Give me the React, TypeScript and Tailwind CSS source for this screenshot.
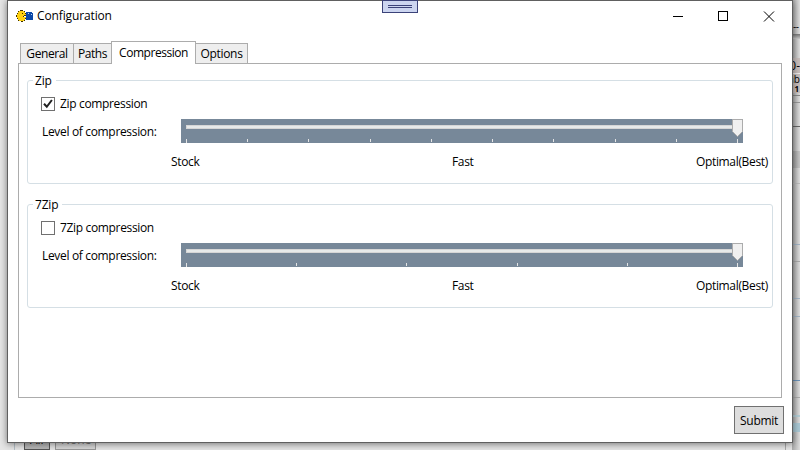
import React from "react";

const zipTicks = [0, 61, 122, 184, 245, 306, 367, 429, 490, 551];
const sevenTicks = [0, 110, 220, 331, 441, 551];

function AppIcon() {
  return (
    <svg width="17" height="12" viewBox="0 0 17 12" shapeRendering="crispEdges">
      <path d="M10 2h6v1h1v7h-7z" fill="#0a48a8" />
      <path d="M12 3h1v1h-1zM15 4h1v1h-1z" fill="#b8d0f4" />
      <path d="M3 1h5v1h1v1h1v2h-2v1h-1v1h3v2h-1v1h-1v1h-5v-1h-1v-1h-1v-6h1v-1h1z" fill="#fdd010" />
      <path d="M4 0h3v1h-3zM2 1h1v1h-1zM8 1h1v1h-1zM1 3h1v1h-1zM0 5h1v2h-1zM1 8h1v1h-1zM2 10h1v1h-1zM5 11h2v1h-2zM8 10h1v1h-1zM9 3h1v1h-1zM6 3h1v1h-1zM8 5h2v1h-2zM7 6h1v1h-1zM9 8h1v1h-1z" fill="#3d3000" />
    </svg>
  );
}

function Slider({ ticks }: { ticks: number[] }) {
  return (
    <svg className="block" width="562" height="24" shapeRendering="crispEdges">
      <rect width="562" height="24" fill="#778899" />
      <rect x="5.5" y="6.5" width="551" height="3" fill="#e7eaea" stroke="#d6d6d6" />
      {ticks.map((x, i) => (
        <rect key={x} x={x + 5} y="20" width="1" height={i === 0 || i === ticks.length - 1 ? 4 : 3} fill="#e5e5e5" />
      ))}
      <path d="M551.5 .5h10v12l-5 5l-5 -5z" fill="#f0f0f0" stroke="#acacac" shapeRendering="auto" />
    </svg>
  );
}

interface GroupProps {
  title: string;
  label: string;
  checked?: boolean;
  ticks: number[];
}

function Group({ title, label, checked, ticks }: GroupProps) {
  return (
    <section className="flex h-[104px] w-[746px] flex-col rounded-[3px] border border-[#d5dfe5] pl-[5px]">
      <h2 className="-mt-[9px] h-[18px] self-start bg-white pr-1 pl-[2px] leading-[18px] tracking-[-0.2px]">{title}</h2>
      <label className="mt-[7px] ml-2 flex h-[14px] items-center">
        <span className="flex h-[14px] w-[14px] items-center justify-center border border-[#707070] bg-white">
          {checked && (
            <svg width="12" height="12" viewBox="0 0 12 12">
              <path d="M2 5.8L4.8 8.8L9.9 2" fill="none" stroke="#212121" strokeWidth="2" />
            </svg>
          )}
        </span>
        <span className="ml-[5px] tracking-[-0.34px]">{label}</span>
      </label>
      <div className="mt-2 ml-2 flex h-6 items-center">
        <span className="w-[140px] pt-[2px] pl-px tracking-[-0.33px]">Level of compression:</span>
        <Slider ticks={ticks} />
      </div>
      <div className="mt-[10px] ml-[138px] grid h-[18px] w-[597px] grid-cols-[281px_1fr_auto] items-center tracking-[-0.33px]">
        <span>Stock</span>
        <span>Fast</span>
        <span>Optimal(Best)</span>
      </div>
    </section>
  );
}

function BackgroundEdge() {
  return (
    <aside className="flex w-[8px] flex-col bg-linear-to-r from-[#aaa] to-[#dedede] text-[10px]">
      <div className="h-[34px] pt-[19px] pl-px leading-[14px] tracking-[-0.5px]">--</div>
      <div className="h-[5px] bg-linear-to-b from-[#777] to-[#ccc]" />
      <div className="h-[19px]" />
      <div className="flex h-[35px] flex-col items-end bg-[#c8bebc]">
        <span className="h-[15px] text-[12px] leading-[15px]">0-</span>
        <span className="h-[12px] border-t border-[#eee] leading-[11px]">ab</span>
        <span className="h-[8px] pr-px text-[8px] leading-[8px] font-bold">1</span>
      </div>
      <div className="mt-[2px] h-px bg-[#888]" />
      <div className="mt-[6px] h-px bg-[#999]" />
      <div className="mt-[23px] h-px bg-[#666]" />
      <div className="mt-6 h-[17px] bg-black/10" />
      <div className="mt-[15px] h-px bg-[#bbb]" />
      <div className="mt-[60px] h-px bg-[#a3b4c5]" />
      <div className="mt-4 h-px bg-[#aaa]" />
      <div className="mt-9 h-px bg-[#a3b4c5]" />
      <div className="mt-[17px] h-px bg-[#a3b4c5]" />
      <div className="mt-[63px] h-px bg-[#6a92b8]" />
      <div className="mt-4 h-px bg-[#aaa]" />
      <div className="mt-[17px] h-[2px] bg-[#b3cdd5]" />
      <div className="mt-[6px] h-[9px] bg-[#aac8d4]" />
    </aside>
  );
}

export default function App() {
  return (
    <div className="grid h-[450px] w-[800px] grid-cols-1 grid-rows-1 overflow-hidden bg-[#e6e6e6] font-['Open_Sans','Noto_Sans',sans-serif] text-[12px] whitespace-nowrap text-black">
      <div className="col-start-1 row-start-1 flex h-[450px]">
        <div className="flex flex-1 items-end pl-[14px]">
          <div className="h-5 w-px bg-[#b5c0c8]" />
          <div className="ml-[9px] h-5 w-[26px] border border-[#555] bg-[#b8b8b8] pl-[5px] leading-[18px]">All</div>
          <div className="ml-[5px] h-5 w-[41px] border border-[#999] bg-[#d8d8d8] pl-[5px] leading-[18px] text-[#777]">None</div>
          <div className="mr-[6px] ml-auto h-5 w-px bg-[#aaa]" />
        </div>
        <BackgroundEdge />
      </div>

      <main className="z-10 col-start-1 row-start-1 ml-[7px] flex h-[443px] w-[786px] flex-col border border-[#606060] bg-white shadow-[0_1px_7px_rgba(0,0,0,0.5)]">
        <header className="flex h-[30px] items-center pl-2">
          <AppIcon />
          <h1 className="ml-1 tracking-[-0.13px]">Configuration</h1>
          <svg className="mr-[17px] ml-auto" width="102" height="11" fill="none" stroke="#000">
            <path d="M0 5.5h10M45.5 .5h9v9h-9z" shapeRendering="crispEdges" />
            <path d="M91 .5l10 10M101 .5l-10 10" />
          </svg>
        </header>

        <nav className="z-10 -mb-px ml-3 flex h-[33px] items-end tracking-[-0.3px]">
          <div className="flex h-[21px] w-[54px] items-center justify-center border border-[#acacac] bg-[#eee] tracking-[-0.4px]">General</div>
          <div className="-ml-px flex h-[21px] w-[39px] items-center justify-center border border-[#acacac] bg-[#eee] tracking-[-0.4px]">Paths</div>
          <div className="-ml-px flex h-[23px] w-[85px] items-center justify-center border border-b-0 border-[#acacac] bg-white tracking-[-0.46px]">Compression</div>
          <div className="-ml-px flex h-[21px] w-[53px] items-center justify-center border border-[#acacac] bg-[#eee]">Options</div>
        </nav>
        <div className="ml-[10px] flex h-[335px] w-[764px] flex-col gap-5 border border-[#acacac] pt-4 pl-2">
          <Group title="Zip" label="Zip compression" checked ticks={zipTicks} />
          <Group title="7Zip" label="7Zip compression" ticks={sevenTicks} />
        </div>
        <button className="mt-2 mr-2 h-7 w-[50px] self-end border border-[#707070] bg-[#ddd] pt-[2px] tracking-[-0.3px]">Submit</button>
      </main>

      <div className="z-20 col-start-1 row-start-1 ml-[382px] flex h-[13px] w-9 flex-col items-center justify-center gap-px border border-[#3b4279] bg-[#ccd5f0]">
        <div className="h-px w-6 bg-[#3b4279]" />
        <div className="h-px w-6 bg-[#3b4279]" />
      </div>
    </div>
  );
}
